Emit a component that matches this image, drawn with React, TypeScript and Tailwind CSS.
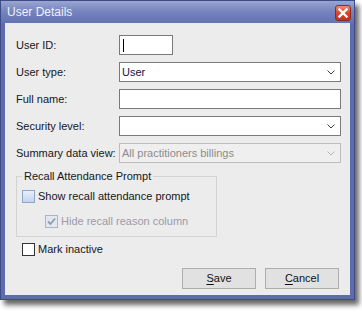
import React from "react";

const Chevron = ({ disabled }: { disabled?: boolean }) => (
  <svg width="8" height="5" viewBox="0 0 8 5" className="shrink-0">
    <path
      d="M0.5 0.5 L4 4 L7.5 0.5"
      fill="none"
      stroke={disabled ? "#b5b5b5" : "#3c3c3c"}
      strokeWidth="1"
    />
  </svg>
);

const Field = ({ label, children }: { label: string; children: React.ReactNode }) => (
  <div className="flex items-center h-[20px]">
    <label className="w-[103px] shrink-0 text-[#161622]">{label}</label>
    {children}
  </div>
);

const Select = ({ value, disabled }: { value?: string; disabled?: boolean }) => (
  <div
    className={
      disabled
        ? "flex items-center w-[222px] h-[20px] border border-[#bcbcbc] bg-[#efefef] pl-[2px] pr-[5px] text-[#8c8c8c]"
        : "flex items-center w-[222px] h-[20px] border border-[#7a7a7a] bg-white pl-[2px] pr-[5px] text-[#12124a]"
    }
  >
    <span className="flex-1 truncate">{value}</span>
    <Chevron disabled={disabled} />
  </div>
);

const Button = ({ first, rest }: { first: string; rest: string }) => (
  <button
    type="button"
    className="w-[74px] h-[21px] border border-[#adadad] bg-[#e1e1e1] text-[#111]"
  >
    <span className="underline underline-offset-2">{first}</span>
    {rest}
  </button>
);

export default function App() {
  return (
    <div className="w-[362px] h-[313px] bg-white font-['Liberation_Sans',Arial,sans-serif] text-[11px] leading-[13px]">
      <div className="w-[355px] h-[300px] flex flex-col border border-[#3e4b85] bg-[#5d6cab] shadow-[4px_5px_5px_rgba(0,0,0,0.6)]">
        {/* title bar */}
        <div className="h-[22px] flex items-center justify-between pl-[6px] pr-[3px] bg-gradient-to-b from-[#9aa5d2] via-[#7482bd] to-[#6473b1]">
          <span className="text-[12px] text-[#f0f2fa]">User Details</span>
          <div className="w-[16px] h-[16px] mt-[2px] rounded-[3px] border border-[#8b2b1f] bg-gradient-to-b from-[#f08a72] via-[#d9452c] to-[#c4331f] flex items-center justify-center">
            <svg width="10" height="10" viewBox="0 0 10 10">
              <path d="M1.5 1.5 L8.5 8.5 M8.5 1.5 L1.5 8.5" stroke="#fff" strokeWidth="2.4" strokeLinecap="square" />
            </svg>
          </div>
        </div>

        {/* client area */}
        <div className="flex-1 mx-[4px] mb-[4px] bg-[#ececec] pl-[11px] pr-[9px] pt-[12px] flex flex-col">
          <div className="flex flex-col gap-[7px]">
            <Field label="User ID:">
              <div className="w-[54px] h-[20px] border border-[#7a7a7a] bg-white flex items-center pl-[3px]">
                <div className="w-[1px] h-[13px] bg-black" />
              </div>
            </Field>
            <Field label="User type:">
              <Select value="User" />
            </Field>
            <Field label="Full name:">
              <div className="w-[222px] h-[20px] border border-[#7a7a7a] bg-white" />
            </Field>
            <Field label="Security level:">
              <Select />
            </Field>
            <Field label="Summary data view:">
              <Select value="All practitioners billings" disabled />
            </Field>
          </div>

          <fieldset className="mt-[7px] w-[201px] border border-[#d3d3d3] pl-[5px] pb-[7px]">
            <legend className="px-[2px] text-[#161622]">Recall Attendance Prompt</legend>
            <div className="flex items-center h-[15px] mt-[6px]">
              <span className="w-[13px] h-[13px] border border-[#8fa5c9] bg-gradient-to-b from-[#e9eff8] to-[#c3d3ea]" />
              <span className="ml-[3px] text-[#161622]">Show recall attendance prompt</span>
            </div>
            <div className="flex items-center h-[15px] mt-[10px] pl-[23px]">
              <span className="w-[13px] h-[13px] border border-[#aab5c9] bg-[#e3e7ef] flex items-center justify-center">
                <svg width="9" height="9" viewBox="0 0 9 9">
                  <path d="M1 4.5 L3.5 7 L8 1.5" fill="none" stroke="#8e9bb6" strokeWidth="1.8" />
                </svg>
              </span>
              <span className="ml-[3px] text-[#9a9aa8]">Hide recall reason column</span>
            </div>
          </fieldset>

          <div className="flex items-center h-[15px] mt-[5px] pl-[6px]">
            <span className="w-[13px] h-[13px] border border-[#333] bg-white" />
            <span className="ml-[3px] text-[#161622]">Mark inactive</span>
          </div>

          <div className="flex justify-end gap-[9px] mt-[11px] pr-[2px]">
            <Button first="S" rest="ave" />
            <Button first="C" rest="ancel" />
          </div>
        </div>
      </div>
    </div>
  );
}
